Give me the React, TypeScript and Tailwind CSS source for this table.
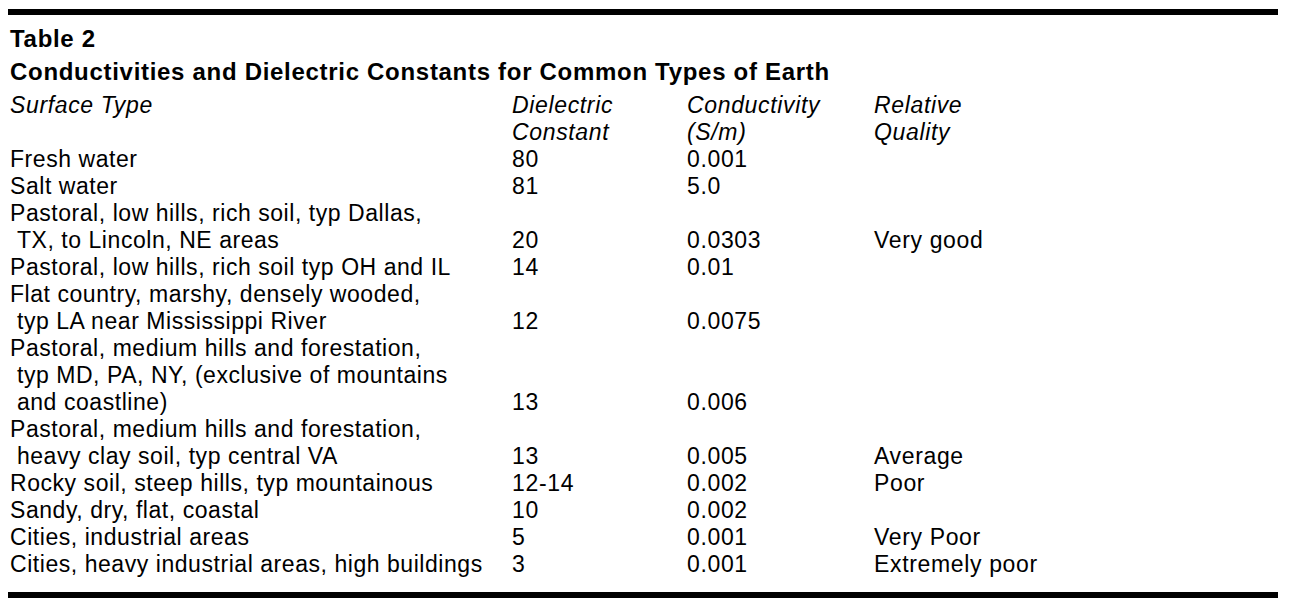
import React from "react";

type Row = { lines: string[]; dielectric: string; conductivity: string; quality: string };

const rows: Row[] = [
  { lines: ["Fresh water"], dielectric: "80", conductivity: "0.001", quality: "" },
  { lines: ["Salt water"], dielectric: "81", conductivity: "5.0", quality: "" },
  {
    lines: ["Pastoral, low hills, rich soil, typ Dallas,", "\u00a0TX, to Lincoln, NE areas"],
    dielectric: "20",
    conductivity: "0.0303",
    quality: "Very good",
  },
  { lines: ["Pastoral, low hills, rich soil typ OH and IL"], dielectric: "14", conductivity: "0.01", quality: "" },
  {
    lines: ["Flat country, marshy, densely wooded,", "\u00a0typ LA near Mississippi River"],
    dielectric: "12",
    conductivity: "0.0075",
    quality: "",
  },
  {
    lines: [
      "Pastoral, medium hills and forestation,",
      "\u00a0typ MD, PA, NY, (exclusive of mountains",
      "\u00a0and coastline)",
    ],
    dielectric: "13",
    conductivity: "0.006",
    quality: "",
  },
  {
    lines: ["Pastoral, medium hills and forestation,", "\u00a0heavy clay soil, typ central VA"],
    dielectric: "13",
    conductivity: "0.005",
    quality: "Average",
  },
  { lines: ["Rocky soil, steep hills, typ mountainous"], dielectric: "12-14", conductivity: "0.002", quality: "Poor" },
  { lines: ["Sandy, dry, flat, coastal"], dielectric: "10", conductivity: "0.002", quality: "" },
  { lines: ["Cities, industrial areas"], dielectric: "5", conductivity: "0.001", quality: "Very Poor" },
  {
    lines: ["Cities, heavy industrial areas, high buildings"],
    dielectric: "3",
    conductivity: "0.001",
    quality: "Extremely poor",
  },
];

const cols = "grid grid-cols-[502px_175px_187px_1fr]";

export default function App() {
  return (
    <div className="bg-white w-[1294px] h-[611px] pt-[9px] pl-[8px] font-['Liberation_Sans',Arial,sans-serif] text-black text-[23px] tracking-[0.65px]">
      <div className="w-[1270px] border-t-[6px] border-b-[6px] border-black pt-[9px] pb-[14px] px-[2px]">
        {/* ===== Caption ===== */}
        <div className="font-bold text-[24px] tracking-[0.7px] leading-[30px]">Table 2</div>
        <div className="font-bold text-[24px] tracking-[0.7px] leading-[30px] mt-[3px]">
          Conductivities and Dielectric Constants for Common Types of Earth
        </div>

        {/* ===== Header ===== */}
        <div className={`${cols} italic leading-[27px] mt-[5px]`}>
          <div>Surface Type</div>
          <div>
            Dielectric
            <br />
            Constant
          </div>
          <div>
            Conductivity
            <br />
            (S/m)
          </div>
          <div>
            Relative
            <br />
            Quality
          </div>
        </div>

        {/* ===== Rows ===== */}
        {rows.map((row, i) => (
          <div key={i} className={`${cols} leading-[27px]`}>
            <div className="whitespace-pre tracking-[0.55px]">
              {row.lines.map((l, j) => (
                <div key={j}>{l}</div>
              ))}
            </div>
            <div className="self-end">{row.dielectric}</div>
            <div className="self-end">{row.conductivity}</div>
            <div className="self-end">{row.quality}</div>
          </div>
        ))}
      </div>
    </div>
  );
}
